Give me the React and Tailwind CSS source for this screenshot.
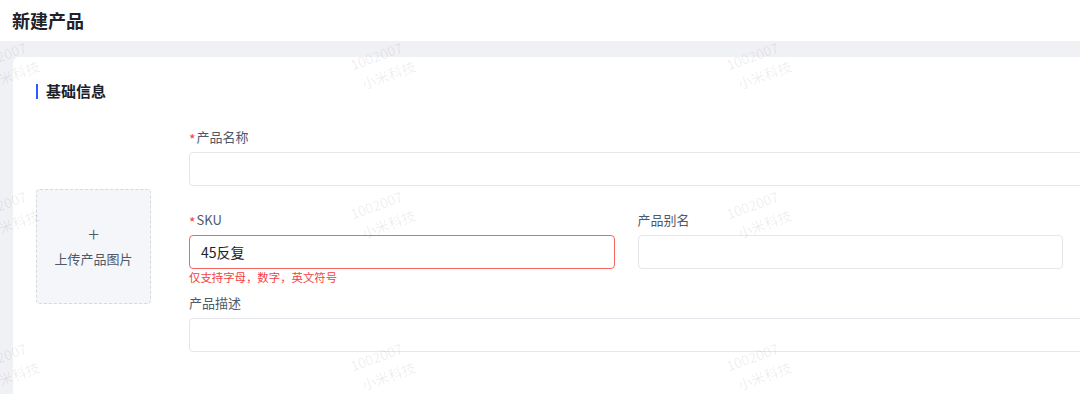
import React from 'react';

const marks = [
  [4, 66], [380, 66], [756, 66],
  [4, 215], [380, 215], [756, 215],
  [4, 367], [380, 367], [756, 367],
];

function Watermark({ x, y }) {
  return (
    <div
      className="absolute w-[80px] h-[48px] flex flex-col items-center justify-center -rotate-[20deg] text-[14px] leading-[22px] text-black/[0.08] pointer-events-none select-none"
      style={{ left: x - 40, top: y - 24 }}
    >
      <span>1002007</span>
      <span className="ml-[10px]">小米科技</span>
    </div>
  );
}

function Label({ required, children }) {
  return (
    <div className="h-[20px] leading-[20px] text-[13px] text-[#4e5969] mb-[5px] flex items-center">
      {required && <span className="text-[#f53f3f] text-[14px] mr-[1px] mt-[4px]">*</span>}
      {children}
    </div>
  );
}

function Input({ value, error, className = '' }) {
  return (
    <div
      className={`h-[34px] rounded-[4px] border bg-white flex items-center px-[11px] text-[14px] text-[#1d2129] ${
        error ? 'border-[#f76560]' : 'border-[#e5e6eb]'
      } ${className}`}
    >
      {value}
    </div>
  );
}

export default function App() {
  return (
    <div
      className="relative w-full h-[394px] overflow-hidden bg-white flex flex-col"
      style={{ fontFamily: '"Noto Sans CJK SC", Inter, sans-serif' }}
    >
      <header className="h-[41px] shrink-0 px-3 flex items-center">
        <h1 className="text-[18px] font-semibold text-[#1d2129]">新建产品</h1>
      </header>

      <main className="flex-1 bg-[#f0f1f5] pt-4 pl-[13px]">
        <div className="h-full bg-white rounded-tl-[6px] pl-[23px] pt-[26px]">
          <div className="flex items-center gap-2 h-[16px]">
            <span className="w-[2px] h-[15px] bg-[#2e5bff]" />
            <span className="text-[15px] font-semibold text-[#1d2129] leading-[16px]">基础信息</span>
          </div>

          <div className="mt-[28px] flex items-start gap-[38px]">
            <div className="mt-[62px] w-[115px] h-[115px] shrink-0 rounded-[4px] border border-dashed border-[#d5d8df] bg-[#f5f6f9] flex flex-col items-center justify-center text-[#4e5969]">
              <span className="text-[20px] leading-[20px] font-light">+</span>
              <span className="text-[13px] mt-[5px]">上传产品图片</span>
            </div>

            <div className="w-[900px] shrink-0">
              <Label required>产品名称</Label>
              <Input />

              <div className="mt-[24px] grid grid-cols-2 gap-x-[23px] w-[874px]">
                <div>
                  <Label required>SKU</Label>
                  <Input value="45反复" error />
                  <div className="mt-[1px] text-[11.4px] leading-[14px] text-[#f53f3f]">仅支持字母，数字，英文符号</div>
                </div>
                <div>
                  <Label>产品别名</Label>
                  <Input />
                </div>
              </div>

              <div className="mt-[9px]">
                <Label>产品描述</Label>
                <Input />
              </div>
            </div>
          </div>
        </div>
      </main>

      {marks.map(([x, y], i) => (
        <Watermark key={i} x={x} y={y} />
      ))}
    </div>
  );
}
